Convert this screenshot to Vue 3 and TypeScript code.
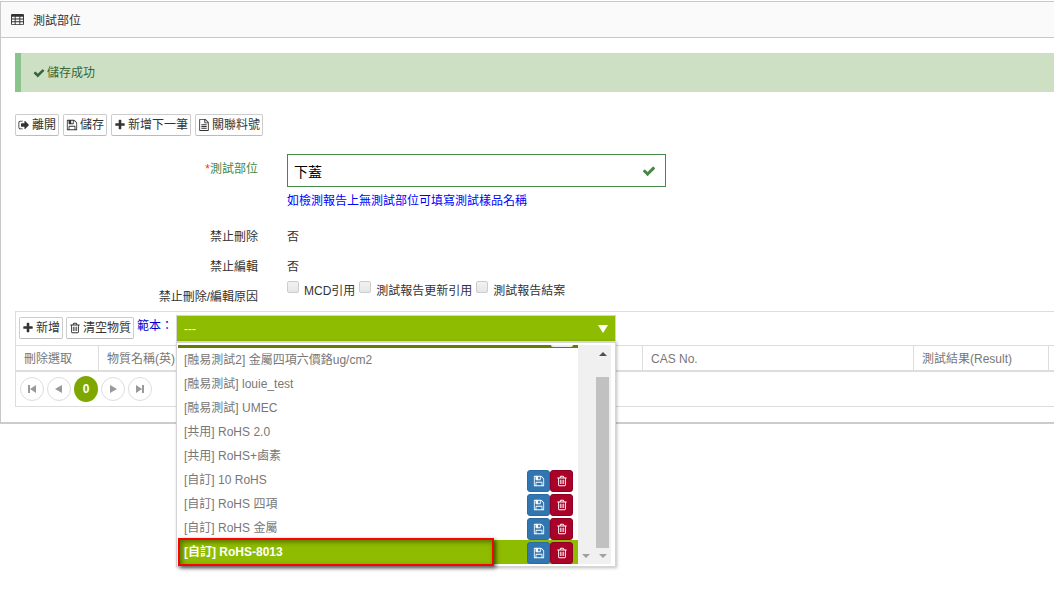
<script setup lang="ts">
import { ref } from 'vue'

interface Template {
  scope: string
  name: string
  editable?: boolean
}

const icons: Record<string, string> = {
  check:
    'M1671 566q0 40-28 68l-724 724-136 136q-28 28-68 28t-68-28l-136-136-362-362q-28-28-28-68t28-68l136-136q28-28 68-28t68 28l294 295 656-657q28-28 68-28t68 28l136 136q28 28 28 68z',
  plus:
    'M1600 736v192q0 40-28 68t-68 28h-416v416q0 40-28 68t-68 28h-192q-40 0-68-28t-28-68v-416h-416q-40 0-68-28t-28-68v-192q0-40 28-68t68-28h416v-416q0-40 28-68t68-28h192q40 0 68 28t28 68v416h416q40 0 68 28t28 68z',
  save:
    'M512 1536h768v-384h-768v384zm896 0h128v-896q0-14-10-38.5t-20-34.5l-281-281q-10-10-34-20t-39-10v416q0 40-28 68t-68 28h-576q-40 0-68-28t-28-68v-416h-128v1280h128v-416q0-40 28-68t68-28h832q40 0 68 28t28 68v416zm-384-928v-320q0-13-9.5-22.5t-22.5-9.5h-192q-13 0-22.5 9.5t-9.5 22.5v320q0 13 9.5 22.5t22.5 9.5h192q13 0 22.5-9.5t9.5-22.5zm640 32v928q0 40-28 68t-68 28h-1344q-40 0-68-28t-28-68v-1344q0-40 28-68t68-28h928q40 0 88 20t76 48l280 280q28 28 48 76t20 88z',
  trash:
    'M704 736v576q0 14-9 23t-23 9h-64q-14 0-23-9t-9-23v-576q0-14 9-23t23-9h64q14 0 23 9t9 23zm256 0v576q0 14-9 23t-23 9h-64q-14 0-23-9t-9-23v-576q0-14 9-23t23-9h64q14 0 23 9t9 23zm256 0v576q0 14-9 23t-23 9h-64q-14 0-23-9t-9-23v-576q0-14 9-23t23-9h64q14 0 23 9t9 23zm128 724v-948h-896v948q0 22 7 40.5t14.5 27 10.5 8.5h832q3 0 10.5-8.5t14.5-27 7-40.5zm-672-1076h448l-48-117q-7-9-17-11h-317q-10 2-17 11zm928 32v64q0 14-9 23t-23 9h-96v948q0 83-47 143.5t-113 60.5h-832q-66 0-113-58.5t-47-141.5v-952h-96q-14 0-23-9t-9-23v-64q0-14 9-23t23-9h309l70-167q15-37 54-63t79-26h320q40 0 79 26t54 63l70 167h309q14 0 23 9t9 23z',
  exit:
    'M704 1440q0 4 1 20t.5 26.5-3 23.5-10 19.5-20.5 6.5h-320q-119 0-203.5-84.5t-84.5-203.5v-704q0-119 84.5-203.5t203.5-84.5h320q13 0 22.5 9.5t9.5 22.5q0 4 1 20t.5 26.5-3 23.5-10 19.5-20.5 6.5h-320q-66 0-113 47t-47 113v704q0 66 47 113t113 47h312l11.5 1 11.5 3 8 5.5 7 9 2 13.5zm928-544q0 26-19 45l-544 544q-19 19-45 19t-45-19-19-45v-288h-448q-26 0-45-19t-19-45v-384q0-26 19-45t45-19h448v-288q0-26 19-45t45-19 45 19l544 544q19 19 19 45z',
  file:
    'M1080 0q50 0 90 38l400 400q38 40 38 90v1170q0 94-94 94h-1236q-94 0-94-94v-1604q0-94 94-94zm16 150v366h366zm-150-20h-630v1530h1160v-1010h-436q-94 0-94-94zM500 800h792v128h-792zM500 1060h792v128h-792zM500 1320h792v128h-792z',
  table:
    'M160 128h1472q160 0 160 160v1216q0 160-160 160h-1472q-160 0-160-160v-1216q0-160 160-160zM128 512v256h384v-256zM640 512v256h512v-256zM1280 512v256h384v-256zM128 896v256h384v-256zM640 896v256h512v-256zM1280 896v256h384v-256zM128 1280v256h384v-256zM640 1280v256h512v-256zM1280 1280v256h384v-256z',
}

const actions = [
  { icon: 'exit', label: '離開' },
  { icon: 'save', label: '儲存' },
  { icon: 'plus', label: '新增下一筆' },
  { icon: 'file', label: '關聯料號' },
]

const reasons = ref([
  { id: 'mcd', label: 'MCD引用', checked: false },
  { id: 'update', label: '測試報告更新引用', checked: false },
  { id: 'close', label: '測試報告結案', checked: false },
])

const templates: Template[] = [
  { scope: '融易測試2', name: '金屬四項六價鉻ug/cm2' },
  { scope: '融易測試', name: 'louie_test' },
  { scope: '融易測試', name: 'UMEC' },
  { scope: '共用', name: 'RoHS 2.0' },
  { scope: '共用', name: 'RoHS+鹵素' },
  { scope: '自訂', name: '10 RoHS', editable: true },
  { scope: '自訂', name: 'RoHS 四項', editable: true },
  { scope: '自訂', name: 'RoHS 金屬', editable: true },
  { scope: '自訂', name: 'RoHS-8013', editable: true },
]

const part = ref('下蓋')
const open = ref(true)
const selected = ref(templates.length - 1)
</script>

<template>
  <main class="page">
    <div class="panel">
      <header class="panel-head">
        <svg class="icon head-icon" viewBox="0 0 1792 1792"><path :d="icons.table" /></svg>
        <h1>測試部位</h1>
      </header>

      <div class="panel-body">
        <div class="alert" role="status">
          <svg class="icon" viewBox="0 0 1792 1792"><path :d="icons.check" /></svg>
          <span>儲存成功</span>
        </div>

        <div class="actions">
          <button v-for="a in actions" :key="a.label" type="button" class="btn">
            <svg class="icon" viewBox="0 0 1792 1792"><path :d="icons[a.icon]" /></svg>{{ a.label }}
          </button>
        </div>

        <form class="form" @submit.prevent>
          <label class="name valid" for="part"><span class="star">*</span>測試部位</label>
          <div class="part-field">
            <div class="input-wrap">
              <input id="part" v-model="part" type="text" />
              <svg class="icon input-check" viewBox="0 0 1792 1792"><path :d="icons.check" /></svg>
            </div>
            <p class="help">如檢測報告上無測試部位可填寫測試樣品名稱</p>
          </div>

          <span class="name">禁止刪除</span>
          <span class="value">否</span>
          <span class="name">禁止編輯</span>
          <span class="value">否</span>
          <span class="name">禁止刪除/編輯原因</span>
          <div class="reasons">
            <label v-for="r in reasons" :key="r.id" :for="r.id">
              <input :id="r.id" v-model="r.checked" type="checkbox" /><span>{{ r.label }}</span>
            </label>
          </div>
        </form>

        <section class="grid">
          <div class="toolbar">
            <button type="button" class="btn">
              <svg class="icon" viewBox="0 0 1792 1792"><path :d="icons.plus" /></svg>新增
            </button>
            <button type="button" class="btn">
              <svg class="icon" viewBox="0 0 1792 1792"><path :d="icons.trash" /></svg>清空物質
            </button>
            <label class="tpl-label" for="template">範本：</label>
            <div class="combo">
              <button id="template" type="button" class="combo-head" aria-haspopup="listbox" :aria-expanded="open" @click="open = !open">
                <span>---</span>
                <svg class="caret" viewBox="0 0 10 8"><path d="M0 0h10L5 8z" /></svg>
              </button>
              <div v-if="open" class="combo-menu">
                <div class="combo-view">
                  <div class="row-edge"><span class="row-edge-btn"></span></div>
                  <ul role="listbox">
                    <li
                      v-for="(t, i) in templates"
                      :key="t.name"
                      role="option"
                      :aria-selected="i === selected"
                      :class="{ selected: i === selected }"
                      @click="selected = i"
                    >
                      <span class="tpl-name">[{{ t.scope }}] {{ t.name }}</span>
                      <template v-if="t.editable">
                        <button type="button" class="mini save" aria-label="儲存">
                          <svg class="icon" viewBox="0 0 1792 1792"><path :d="icons.save" /></svg>
                        </button>
                        <button type="button" class="mini remove" aria-label="刪除">
                          <svg class="icon" viewBox="0 0 1792 1792"><path :d="icons.trash" /></svg>
                        </button>
                      </template>
                    </li>
                  </ul>
                </div>
                <div class="track inner">
                  <svg class="arrow pale" viewBox="0 0 8 4"><path d="M0 0h8L4 4z" /></svg>
                </div>
                <div class="track outer">
                  <svg class="arrow" viewBox="0 0 8 4"><path d="M0 4h8L4 0z" /></svg>
                  <div class="thumb"></div>
                  <svg class="arrow pale" viewBox="0 0 8 4"><path d="M0 0h8L4 4z" /></svg>
                </div>
                <div class="marker"></div>
              </div>
            </div>
          </div>

          <table>
            <colgroup>
              <col class="c-del" /><col class="c-name" /><col class="c-cas" /><col class="c-result" /><col />
            </colgroup>
            <thead>
              <tr>
                <th>刪除選取</th>
                <th>物質名稱(英)</th>
                <th>CAS No.</th>
                <th>測試結果(Result)</th>
                <th></th>
              </tr>
            </thead>
          </table>

          <nav class="pager">
            <button type="button" aria-label="第一頁"><svg viewBox="0 0 10 10"><path d="M1 1h2v8H1zM9 1v8L3 5z" /></svg></button>
            <button type="button" aria-label="上一頁"><svg viewBox="0 0 10 10"><path d="M8 1v8L1 5z" /></svg></button>
            <button type="button" class="current">0</button>
            <button type="button" aria-label="下一頁"><svg viewBox="0 0 10 10"><path d="M2 1v8l7-4z" /></svg></button>
            <button type="button" aria-label="最後一頁"><svg viewBox="0 0 10 10"><path d="M7 1h2v8H7zM1 1v8l6-4z" /></svg></button>
          </nav>
        </section>
      </div>
    </div>
  </main>
</template>

<style>
body {
  background: #fff;
}
</style>

<style scoped>
* {
  box-sizing: border-box;
}
.page {
  min-height: 100vh;
  padding-top: 1px;
}
.panel {
  border: 1px solid #c8c8c8;
  border-right: 0;
  border-bottom: 2px solid #ccc;
  font: 12px/18px "Liberation Sans", "Noto Sans CJK TC", sans-serif;
  color: #333;
}
button,
input {
  font: inherit;
  color: inherit;
  margin: 0;
}
.icon {
  display: block;
  width: 12px;
  height: 12px;
  fill: currentColor;
  fill-rule: evenodd;
  flex: none;
}
.panel-head {
  display: flex;
  align-items: center;
  gap: 9px;
  height: 36px;
  padding-left: 10px;
  background: #fafafa;
  border-bottom: 1px solid #c8c8c8;
}
.head-icon {
  width: 13px;
  height: 13px;
}
h1 {
  margin: 0;
  padding-top: 2px;
  font-size: 12px;
  font-weight: 400;
}
.panel-body {
  padding: 15px 0 15px 14px;
}
.alert {
  display: flex;
  align-items: center;
  gap: 2px;
  height: 39px;
  padding-left: 12px;
  border-left: 6px solid #89c48d;
  background: #cde0c4;
  color: #356635;
}
.actions {
  display: flex;
  gap: 4px;
  margin-top: 22px;
}
.btn {
  display: flex;
  align-items: center;
  gap: 2px;
  height: 22px;
  padding: 0 2px;
  border: 1px solid #ccc;
  border-bottom-color: #bbb;
  border-radius: 2px;
  background: #fff;
  white-space: nowrap;
}
.form {
  display: grid;
  grid-template-columns: 243px 1fr;
  column-gap: 29px;
  grid-template-rows: 68px 30px 30px 29px;
  margin-top: 18px;
}
.name {
  text-align: right;
  padding-top: 6px;
}
.value {
  padding-top: 6px;
}
.valid {
  color: #468847;
}
.star {
  color: #f30;
}
.input-wrap {
  position: relative;
  max-width: 379px;
}
.input-wrap input {
  display: block;
  width: 100%;
  height: 33px;
  padding: 0 32px 0 6px;
  border: 1px solid #468847;
  border-radius: 0;
  background: #fff;
  color: #000;
  font-size: 14px;
  outline: 0;
}
.input-check {
  position: absolute;
  right: 10px;
  top: 10px;
  width: 14px;
  height: 14px;
  color: #468847;
}
.help {
  margin: 5px 0 0;
  color: #00f;
}
.reasons {
  display: flex;
  gap: 4px;
}
.reasons label {
  display: flex;
  gap: 5px;
  white-space: nowrap;
}
.reasons input {
  appearance: none;
  width: 12px;
  height: 12px;
  margin-top: -1px;
  border: 1px solid #ccc;
  border-radius: 2px;
  background: linear-gradient(#f2f2f2, #e6e6e6);
}
.reasons input:checked {
  background: #468847;
}
.grid {
  border: 1px solid #ddd;
  border-right: 0;
}
.toolbar {
  display: flex;
  height: 33px;
  padding: 5px 3px 0;
  gap: 3px;
}
.tpl-label {
  width: 36px;
  color: #00c;
  white-space: nowrap;
}
.combo {
  position: relative;
  width: 440px;
  margin-top: -2px;
}
.combo-head {
  display: flex;
  align-items: center;
  justify-content: space-between;
  width: 100%;
  height: 27px;
  padding: 0 7px;
  border: 1px solid #d5d5d5;
  border-bottom: 0;
  border-radius: 0;
  background: #8ebc00;
  color: #fff;
}
.caret {
  width: 10px;
  height: 8px;
  fill: #fff;
}
.combo-menu {
  position: absolute;
  z-index: 2;
  top: 26px;
  left: 0;
  display: flex;
  width: 100%;
  padding: 2px 4px 2px 1px;
  border: 1px solid #d5d5d5;
  border-top-width: 2px;
  background: #fff;
  box-shadow: 1px 1px 3px rgba(0, 0, 0, 0.25);
}
.combo-view {
  flex: 1;
}
.row-edge {
  display: flex;
  justify-content: flex-end;
  height: 3px;
  padding-right: 5px;
  background: #5f7f00;
}
.row-edge-btn {
  width: 22px;
  height: 2px;
  border-radius: 0 0 3px 3px;
  background: #eee;
}
ul {
  margin: 0;
  padding: 0;
  list-style: none;
}
li {
  display: flex;
  align-items: center;
  height: 24px;
  padding: 0 5px 0 6px;
  color: #777;
  cursor: pointer;
}
.tpl-name {
  flex: 1;
}
li.selected {
  background: #8ebc00;
  color: #fff;
  font-weight: 700;
}
.mini {
  display: flex;
  align-items: center;
  justify-content: center;
  width: 23px;
  height: 22px;
  margin-top: 2px;
  padding: 0;
  border: 1px solid #2a6ba4;
  border-radius: 3px;
  background: #3276b1;
  color: #fff;
}
.remove {
  border-color: #900022;
  background: #a90329;
}
.track {
  display: flex;
  flex-direction: column;
  align-items: center;
  background: #f0f0f0;
  padding: 7px 0 6px;
}
.inner {
  width: 16px;
  justify-content: flex-end;
}
.outer {
  width: 17px;
}
.arrow {
  width: 8px;
  height: 4px;
  flex: none;
  fill: #505050;
}
.pale {
  fill: #a0a0a0;
}
.thumb {
  width: 13px;
  height: 171px;
  margin: 21px 0 auto;
  background: #c1c1c1;
}
.marker {
  position: absolute;
  left: 1px;
  bottom: 0;
  width: 316px;
  height: 28px;
  border: 2px solid #f00;
  box-shadow: 2px 2px 4px rgba(0, 0, 0, 0.6), inset 2px 2px 5px rgba(0, 0, 0, 0.4);
  pointer-events: none;
}
table {
  width: 100%;
  table-layout: fixed;
  border-collapse: separate;
  border-spacing: 0;
}
.c-del {
  width: 83px;
}
.c-name {
  width: 544px;
}
.c-cas {
  width: 271px;
}
.c-result {
  width: 135px;
}
th {
  height: 27px;
  padding: 1px 8px 0;
  border-top: 1px solid #ddd;
  border-right: 1px solid #ddd;
  border-bottom: 2px solid #ddd;
  color: #777;
  font-weight: 400;
  text-align: left;
  white-space: nowrap;
}
th:last-child {
  padding: 0;
  border-right: 0;
}
.pager {
  display: flex;
  align-items: center;
  gap: 3px;
  height: 34px;
  padding-left: 4px;
}
.pager button {
  display: flex;
  align-items: center;
  justify-content: center;
  width: 24px;
  height: 24px;
  padding: 0;
  border: 1px solid #ddd;
  border-radius: 50%;
  background: #fff;
}
.pager svg {
  width: 10px;
  height: 10px;
  fill: #999;
}
.pager .current {
  height: 26px;
  border: 0;
  background: #7ea700;
  color: #fff;
  font-weight: 700;
}
</style>
